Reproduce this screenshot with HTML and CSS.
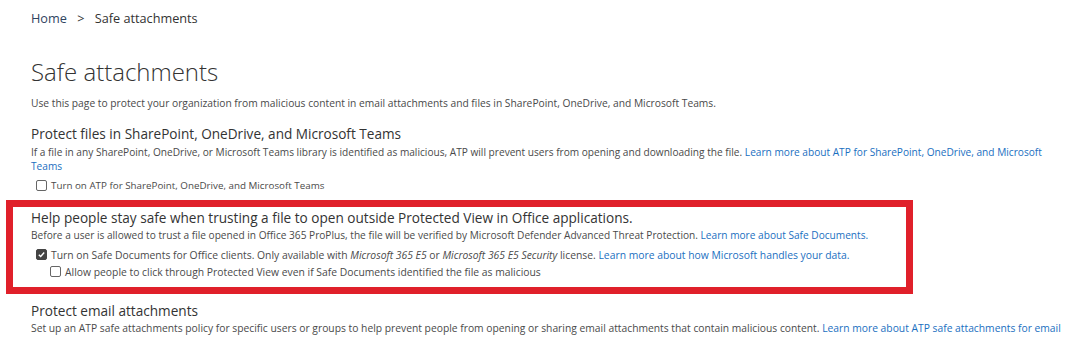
FILE: index.html
```html
<!DOCTYPE html>
<html lang="en">
<head>
    <meta charset="UTF-8">
    <meta name="viewport" content="width=device-width, initial-scale=1.0">
    <title>Safe attachments</title>
    <link rel="stylesheet" href="styles.css">
</head>
<body>
    <div class="page">
        <nav class="breadcrumb">
            <a href="#">Home</a>
            <span class="sep">&gt;</span>
            <span>Safe attachments</span>
        </nav>

        <h1>Safe attachments</h1>
        <p class="intro">Use this page to protect your organization from malicious content in email attachments and files in SharePoint, OneDrive, and Microsoft Teams.</p>

        <section class="section">
            <h2>Protect files in SharePoint, OneDrive, and Microsoft Teams</h2>
            <p class="desc">If a file in any SharePoint, OneDrive, or Microsoft Teams library is identified as malicious, ATP will prevent users from opening and downloading the file. <a href="#">Learn more about ATP for SharePoint, OneDrive, and Microsoft Teams</a></p>
            <label class="check">
                <input type="checkbox">
                <span class="box"></span>
                Turn on ATP for SharePoint, OneDrive, and Microsoft Teams
            </label>
        </section>

        <section class="section highlight">
            <h2>Help people stay safe when trusting a file to open outside Protected View in Office applications.</h2>
            <p class="desc">Before a user is allowed to trust a file opened in Office 365 ProPlus, the file will be verified by Microsoft Defender Advanced Threat Protection. <a href="#">Learn more about Safe Documents.</a></p>
            <label class="check">
                <input type="checkbox" checked>
                <span class="box"></span>
                <span>Turn on Safe Documents for Office clients. Only available with <em>Microsoft 365 E5</em> or <em>Microsoft 365 E5 Security</em> license. <a href="#">Learn more about how Microsoft handles your data.</a></span>
            </label>
            <label class="check sub">
                <input type="checkbox">
                <span class="box"></span>
                Allow people to click through Protected View even if Safe Documents identified the file as malicious
            </label>
        </section>

        <section class="section email">
            <h2>Protect email attachments</h2>
            <p class="desc">Set up an ATP safe attachments policy for specific users or groups to help prevent people from opening or sharing email attachments that contain malicious content. <a href="#">Learn more about ATP safe attachments for email</a></p>
        </section>
    </div>
</body>
</html>
```

FILE: styles.css
```css
* {
    margin: 0;
    padding: 0;
    box-sizing: border-box;
}

body {
    background: #fff;
    font-family: "Open Sans", "Noto Sans", sans-serif;
    color: #4a4a4a;
}

.page {
    padding: 8px 4px 0 31px;
}

a {
    color: #1a6fbf;
    text-decoration: none;
}

.breadcrumb {
    font-size: 12.7px;
    color: #333;
    height: 20px;
    line-height: 20px;
}

.breadcrumb a {
    color: #2f4460;
}

.breadcrumb .sep {
    margin: 0 7px;
}

h1 {
    font-size: 24px;
    font-weight: 300;
    color: #333;
    margin-top: 29px;
    line-height: 30px;
}

.intro {
    font-size: 10.25px;
    line-height: 14px;
    margin-top: 9px;
}

.section {
    margin-top: 15px;
}

h2 {
    font-size: 13.6px;
    font-weight: 400;
    color: #333;
    line-height: 18px;
}

.desc {
    font-size: 10.15px;
    line-height: 14px;
    margin-top: 2px;
}

.check {
    display: flex;
    align-items: flex-start;
    gap: 4px;
    font-size: 9.8px;
    line-height: 14px;
    margin-top: 6px;
    margin-left: 5px;
}

.check input {
    display: none;
}

.check .box {
    flex: none;
    width: 11px;
    height: 11px;
    margin-top: 1px;
    border: 1px solid #666;
    border-radius: 2px;
    background: #fff;
}

.check input:checked + .box {
    background: #444 url("data:image/svg+xml,%3Csvg xmlns='http://www.w3.org/2000/svg' viewBox='0 0 10 10'%3E%3Cpath d='M2 5.2 4.1 7.2 8 2.8' fill='none' stroke='%23fff' stroke-width='1.6'/%3E%3C/svg%3E") center / 100% no-repeat;
    border-color: #444;
}

.check.sub {
    margin-left: 19px;
    margin-top: 3px;
}

.highlight {
    border: 7px solid #e0202a;
    margin-top: 7px;
    margin-left: -25px;
    width: 907px;
    padding: 2px 0 8px 18px;
}

.highlight .desc {
    margin-top: 1px;
}

.highlight .check {
    font-size: 10.35px;
}

.email {
    margin-top: 8px;
}

.email .desc {
    margin-top: 1px;
    font-size: 10.3px;
}

em {
    font-style: italic;
}
```
